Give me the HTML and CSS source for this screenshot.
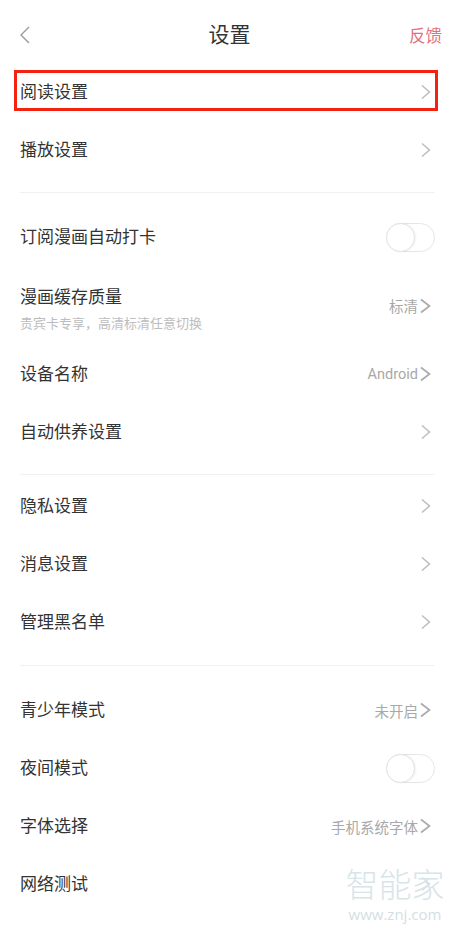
FILE: index.html
```html
<!DOCTYPE html>
<html lang="zh-CN">
<head>
    <meta charset="UTF-8">
    <meta name="viewport" content="width=device-width, initial-scale=1.0">
    <title>设置</title>
    <link rel="stylesheet" href="styles.css">
</head>
<body>
    <div class="page">
        <div class="navbar">
            <svg class="back" width="12" height="18" viewBox="0 0 12 18">
                <path d="M10 1 L2 9 L10 17" fill="none" stroke="#9a9a9a" stroke-width="1.4"/>
            </svg>
            <div class="title">设置</div>
            <div class="feedback">反馈</div>
        </div>

        <div class="group first">
            <div class="row">
                <span class="label">阅读设置</span>
                <svg class="arrow" width="15" height="16" viewBox="0 0 15 16"><path d="M2 1.5 L9.5 8 L2 14.5"/></svg>
                <div class="highlight"></div>
            </div>
            <div class="row">
                <span class="label">播放设置</span>
                <svg class="arrow" width="15" height="16" viewBox="0 0 15 16"><path d="M2 1.5 L9.5 8 L2 14.5"/></svg>
            </div>
        </div>

        <div class="group">
            <div class="row">
                <span class="label">订阅漫画自动打卡</span>
                <span class="switch"><span class="knob"></span></span>
            </div>
            <div class="row tall">
                <div class="text">
                    <div class="label">漫画缓存质量</div>
                    <div class="sub">贵宾卡专享，高清标清任意切换</div>
                </div>
                <div class="right">
                    <span class="value">标清</span>
                    <svg class="arrow dark" width="15" height="16" viewBox="0 0 15 16"><path d="M1 1.5 L9.5 8 L1 14.5"/></svg>
                </div>
            </div>
            <div class="row">
                <span class="label">设备名称</span>
                <div class="right">
                    <span class="value">Android</span>
                    <svg class="arrow dark" width="15" height="16" viewBox="0 0 15 16"><path d="M1 1.5 L9.5 8 L1 14.5"/></svg>
                </div>
            </div>
            <div class="row">
                <span class="label">自动供养设置</span>
                <svg class="arrow" width="15" height="16" viewBox="0 0 15 16"><path d="M2 1.5 L9.5 8 L2 14.5"/></svg>
            </div>
        </div>

        <div class="group tight">
            <div class="row">
                <span class="label">隐私设置</span>
                <svg class="arrow" width="15" height="16" viewBox="0 0 15 16"><path d="M2 1.5 L9.5 8 L2 14.5"/></svg>
            </div>
            <div class="row">
                <span class="label">消息设置</span>
                <svg class="arrow" width="15" height="16" viewBox="0 0 15 16"><path d="M2 1.5 L9.5 8 L2 14.5"/></svg>
            </div>
            <div class="row">
                <span class="label">管理黑名单</span>
                <svg class="arrow" width="15" height="16" viewBox="0 0 15 16"><path d="M2 1.5 L9.5 8 L2 14.5"/></svg>
            </div>
        </div>

        <div class="group">
            <div class="row">
                <span class="label">青少年模式</span>
                <div class="right">
                    <span class="value">未开启</span>
                    <svg class="arrow dark" width="15" height="16" viewBox="0 0 15 16"><path d="M1 1.5 L9.5 8 L1 14.5"/></svg>
                </div>
            </div>
            <div class="row">
                <span class="label">夜间模式</span>
                <span class="switch"><span class="knob"></span></span>
            </div>
            <div class="row">
                <span class="label">字体选择</span>
                <div class="right">
                    <span class="value">手机系统字体</span>
                    <svg class="arrow dark" width="15" height="16" viewBox="0 0 15 16"><path d="M1 1.5 L9.5 8 L1 14.5"/></svg>
                </div>
            </div>
            <div class="row">
                <span class="label">网络测试</span>
                <svg class="arrow faint" width="15" height="16" viewBox="0 0 15 16"><path d="M2 1.5 L9.5 8 L2 14.5"/></svg>
            </div>
        </div>

        <!-- site watermark over the bottom corner -->
        <div class="watermark">
            <div class="wm-logo">智能家</div>
            <div class="wm-url">www.znj.com</div>
        </div>
    </div>
</body>
</html>
```

FILE: styles.css
```css
body {
    margin: 0;
    background-color: #fff;
    font-family: Roboto, "Noto Sans CJK SC", sans-serif;
    color: #333;
}
.page {
    position: relative;
    width: 455px;
    height: 933px;
    overflow: hidden;
}
.navbar {
    height: 70px;
    display: grid;
    grid-template-columns: 1fr auto 1fr;
    align-items: center;
    padding: 0 13px 0 19px;
}
.navbar .back {
    display: block;
}
.navbar .title {
    font-size: 21px;
    line-height: 24px;
    color: #333;
    margin-right: 2px;
}
.navbar .feedback {
    justify-self: end;
    font-size: 16.5px;
    color: #e2707f;
}
.group {
    border-top: 1px solid #f1f1f1;
    margin: 0 20px;
    padding: 15px 0 13px;
}
.group.first {
    border-top: none;
    padding: 0 0 13px;
    margin-top: -7px;
}
.group.tight {
    padding-top: 2px;
    padding-bottom: 14px;
}
.row {
    position: relative;
    height: 58px;
    display: flex;
    align-items: center;
    justify-content: space-between;
}
.row.tall {
    height: 79px;
}
.label {
    font-size: 17px;
    line-height: 22px;
    color: #333;
}
.text {
    padding-top: 8px;
}
.sub {
    margin-top: 7px;
    font-size: 13px;
    line-height: 18px;
    color: #bdbdbd;
}
.right {
    display: flex;
    align-items: center;
}
.value {
    font-size: 14.5px;
    color: #a8a8a8;
    margin-right: 2px;
}
.arrow {
    display: block;
}
.arrow path {
    fill: none;
    stroke: #bdbdbd;
    stroke-width: 1.5;
}
.arrow.dark path {
    stroke: #aaa;
    stroke-width: 1.7;
}
.arrow.faint path {
    stroke: #dcdcdc;
}
.switch {
    position: relative;
    width: 47px;
    height: 27px;
    border: 1px solid #e6e6e6;
    border-radius: 15px;
    background-color: #fff;
}
.knob {
    position: absolute;
    left: -1px;
    top: -1px;
    width: 27px;
    height: 27px;
    border: 1px solid #e3e3e3;
    border-radius: 50%;
    background-color: #fff;
    box-shadow: 1px 0 2px rgba(0, 0, 0, 0.06);
}
/* red annotation box drawn over the first row */
.highlight {
    position: absolute;
    left: -6px;
    right: -3px;
    top: 7px;
    height: 35px;
    border: 3px solid #f3230f;
}
.watermark {
    position: absolute;
    left: 344px;
    top: 866px;
    width: 102px;
    text-align: center;
    color: #d8e5e8;
}
.wm-logo {
    font-size: 33px;
    line-height: 40px;
    font-weight: 300;
}
.wm-url {
    font-family: "Open Sans", sans-serif;
    font-size: 15px;
    line-height: 16px;
    color: #d3e0e3;
}
```
